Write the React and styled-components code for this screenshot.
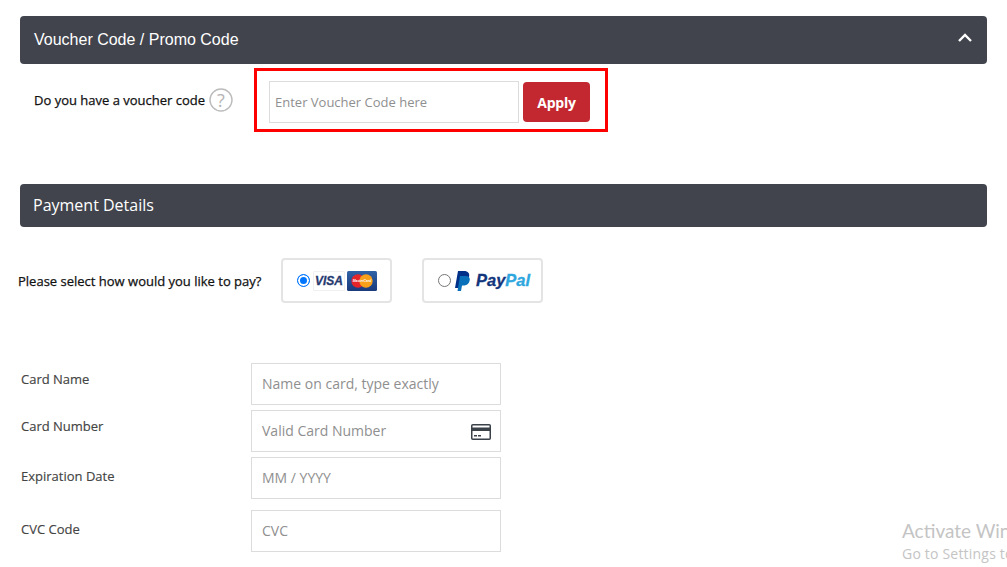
import React from "react";
import styled, { createGlobalStyle } from "styled-components";

const GlobalStyle = createGlobalStyle`
  html, body {
    margin: 0;
    padding: 0;
    background: #fff;
    overflow: hidden;
    height: 567px;
  }
  * {
    box-sizing: border-box;
  }
`;

const Page = styled.div`
  position: relative;
  width: 1007px;
  height: 567px;
  padding: 16px 20px 0 20px;
  font-family: "Open Sans", sans-serif;
  overflow: hidden;
`;

const SectionBar = styled.div`
  display: flex;
  align-items: center;
  justify-content: space-between;
  height: ${(p) => p.$height}px;
  padding: 0 14px ${(p) => p.$lift || 0}px ${(p) => p.$inset}px;
  background: #41444d;
  border-radius: 4px;
  color: #fff;
  font-size: 16px;
  font-family: ${(p) => (p.$arial ? '"Liberation Sans", sans-serif' : '"Open Sans", sans-serif')};
`;

const Chevron = styled.svg`
  margin-bottom: 4px;
`;

const VoucherRow = styled.div`
  display: flex;
  align-items: center;
  height: 64px;
  margin: 4px 0 52px 0;
`;

const VoucherLabel = styled.div`
  display: flex;
  align-items: center;
  gap: 4px;
  width: 234px;
  padding-left: 14px;
  font-size: 13px;
  -webkit-text-stroke: 0.25px #111;
  color: #111;
`;

const Highlight = styled.div`
  display: flex;
  align-items: center;
  gap: 4px;
  width: 354px;
  height: 64px;
  padding: 4px 0 0 12px;
  border: 3px solid #ff0000;
`;

const TextBox = styled.div`
  position: relative;
  display: flex;
  align-items: center;
  width: 250px;
  height: 42px;
  padding: 0 0 ${(p) => (p.$small ? 0 : 2)}px ${(p) => (p.$small ? 5 : 10)}px;
  border: 1px solid #dcdcdc;
  background: #fff;
  color: #8f8f8f;
  font-size: ${(p) => (p.$small ? 13 : 14)}px;
`;

const ApplyButton = styled.button`
  width: 67px;
  height: 40px;
  padding: 0;
  border: none;
  border-radius: 4px;
  background: #c32830;
  color: #fff;
  font-family: "Open Sans", sans-serif;
  font-size: 14px;
  font-weight: 700;
  letter-spacing: -0.2px;
`;

const PayRow = styled.div`
  display: flex;
  align-items: center;
  height: 45px;
  margin: 31px 0 60px -2px;
`;

const PayLabel = styled.div`
  width: 263px;
  font-size: 13px;
  -webkit-text-stroke: 0.25px #111;
  color: #111;
`;

const PayOption = styled.div`
  display: flex;
  align-items: center;
  width: ${(p) => p.$width}px;
  height: 45px;
  margin-right: 30px;
  padding-left: 14px;
  border: 2px solid #e4e4e4;
  border-radius: 4px;
`;

const Radio = styled.span`
  flex: none;
  width: 13px;
  height: 13px;
  margin-right: 3px;
  border-radius: 50%;
  border: 1px solid ${(p) => (p.$checked ? "#0075ff" : "#767676")};
  background: ${(p) => (p.$checked ? "#0075ff" : "#fff")};
  box-shadow: ${(p) => (p.$checked ? "inset 0 0 0 2px #fff" : "none")};
`;

const VisaMark = styled.span`
  display: flex;
  align-items: center;
  justify-content: center;
  width: 32px;
  height: 20px;
  margin-right: 2px;
  font-family: "Liberation Sans", sans-serif;
  font-size: 12px;
  font-style: italic;
  font-weight: 700;
  -webkit-text-stroke: 0.3px #263a70;
  color: #263a70;
  background: #fff;
  border: 1px solid #f0f0f0;
  border-radius: 1px;
`;

const PayPalWord = styled.span`
  margin-left: 6px;
  font-family: "Liberation Sans", sans-serif;
  font-size: 16.5px;
  font-style: italic;
  font-weight: 700;
  -webkit-text-stroke: 0.3px currentColor;
  color: #12357c;
  & > em {
    color: #2ea6de;
  }
`;

const FormRow = styled.div`
  display: flex;
  align-items: flex-start;
  margin-bottom: ${(p) => p.$gap}px;
`;

const FieldLabel = styled.div`
  width: 231px;
  padding: ${(p) => p.$top}px 0 0 1px;
  font-size: 13px;
  -webkit-text-stroke: 0.15px #444;
  color: #444;
`;

const CardIcon = styled.svg`
  position: absolute;
  right: 9px;
  top: 13px;
`;

const Watermark = styled.div`
  position: absolute;
  left: 902px;
  top: 518px;
  width: 105px;
  overflow: hidden;
  white-space: nowrap;
  color: #c4c4c4;
`;

const WatermarkTitle = styled.div`
  font-family: "Lato", sans-serif;
  font-size: 19px;
  line-height: 26px;
`;

const WatermarkNote = styled.div`
  font-family: "Open Sans", sans-serif;
  font-size: 14px;
  letter-spacing: 0.2px;
  line-height: 20px;
`;

const fields = [
  { label: "Card Name", placeholder: "Name on card, type exactly", top: 7, gap: 5 },
  { label: "Card Number", placeholder: "Valid Card Number", top: 7, card: true, gap: 5 },
  { label: "Expiration Date", placeholder: "MM / YYYY", top: 10, gap: 11 },
  { label: "CVC Code", placeholder: "CVC", top: 10, gap: 0 },
];

function App() {
  return (
    <Page>
      <GlobalStyle />
      <SectionBar $height={48} $inset={14} $arial>
        <span>Voucher Code / Promo Code</span>
        <Chevron width="16" height="10" viewBox="0 0 16 10">
          <path d="M2 8 L8 2 L14 8" fill="none" stroke="#fff" strokeWidth="2.4" />
        </Chevron>
      </SectionBar>

      <VoucherRow>
        <VoucherLabel>
          <span>Do you have a voucher code</span>
          <svg width="24" height="24" viewBox="0 0 24 24">
            <circle cx="12" cy="12" r="11" fill="none" stroke="#bcbcbc" strokeWidth="1.4" />
            <text x="12" y="18.5" textAnchor="middle" fontFamily="Open Sans" fontSize="18" fill="#b4b4b4">
              ?
            </text>
          </svg>
        </VoucherLabel>
        <Highlight>
          <TextBox $small>Enter Voucher Code here</TextBox>
          <ApplyButton>Apply</ApplyButton>
        </Highlight>
      </VoucherRow>

      <SectionBar $height={43} $inset={13} $lift={2}>
        <span>Payment Details</span>
      </SectionBar>

      <PayRow>
        <PayLabel>Please select how would you like to pay?</PayLabel>
        <PayOption $width={111}>
          <Radio $checked />
          <VisaMark>VISA</VisaMark>
          <svg width="30" height="20" viewBox="0 0 30 20">
            <defs>
              <linearGradient id="mcBack" x1="0" y1="0" x2="0" y2="1">
                <stop offset="0" stopColor="#2f63a6" />
                <stop offset="1" stopColor="#1a3a7c" />
              </linearGradient>
            </defs>
            <rect width="30" height="20" rx="1.5" fill="url(#mcBack)" />
            <circle cx="11" cy="10" r="6.7" fill="#e5252a" />
            <circle cx="19" cy="10" r="6.7" fill="#f9a01b" />
            <text x="15" y="11.2" textAnchor="middle" fontFamily="Liberation Sans" fontSize="3.4" fontStyle="italic" fontWeight="700" fill="#fff">
              MasterCard
            </text>
          </svg>
        </PayOption>
        <PayOption $width={121}>
          <Radio />
          <svg width="16" height="20" viewBox="0 0 16 20">
            <path d="M4 0 H10 C14 0 16 2.5 15 6 C14 10 11 11.5 8 11.5 H6 L5 17 H1 Z" fill="#003087" />
            <path d="M6 5 H12 C15 5 16.5 7 15.5 10 C14.5 13.5 12 14.5 9.5 14.5 H8 L7 20 H3.5 Z" fill="#0a70ba" />
          </svg>
          <PayPalWord>
            Pay<em>Pal</em>
          </PayPalWord>
        </PayOption>
      </PayRow>

      {fields.map((field) => (
        <FormRow key={field.label} $gap={field.gap}>
          <FieldLabel $top={field.top}>{field.label}</FieldLabel>
          <TextBox>
            {field.placeholder}
            {field.card && (
              <CardIcon width="20" height="16" viewBox="0 0 20 16">
                <rect x="0.75" y="0.75" width="18.5" height="14.5" rx="1" fill="#fff" stroke="#3a4148" strokeWidth="1.5" />
                <rect x="0" y="3.5" width="20" height="3.5" fill="#3a4148" />
                <rect x="3" y="11" width="3" height="1.5" fill="#3a4148" />
                <rect x="7" y="11" width="3" height="1.5" fill="#3a4148" />
              </CardIcon>
            )}
          </TextBox>
        </FormRow>
      ))}

      <Watermark>
        <WatermarkTitle>Activate Windows</WatermarkTitle>
        <WatermarkNote>Go to Settings to activate Windows.</WatermarkNote>
      </Watermark>
    </Page>
  );
}

export default App;
